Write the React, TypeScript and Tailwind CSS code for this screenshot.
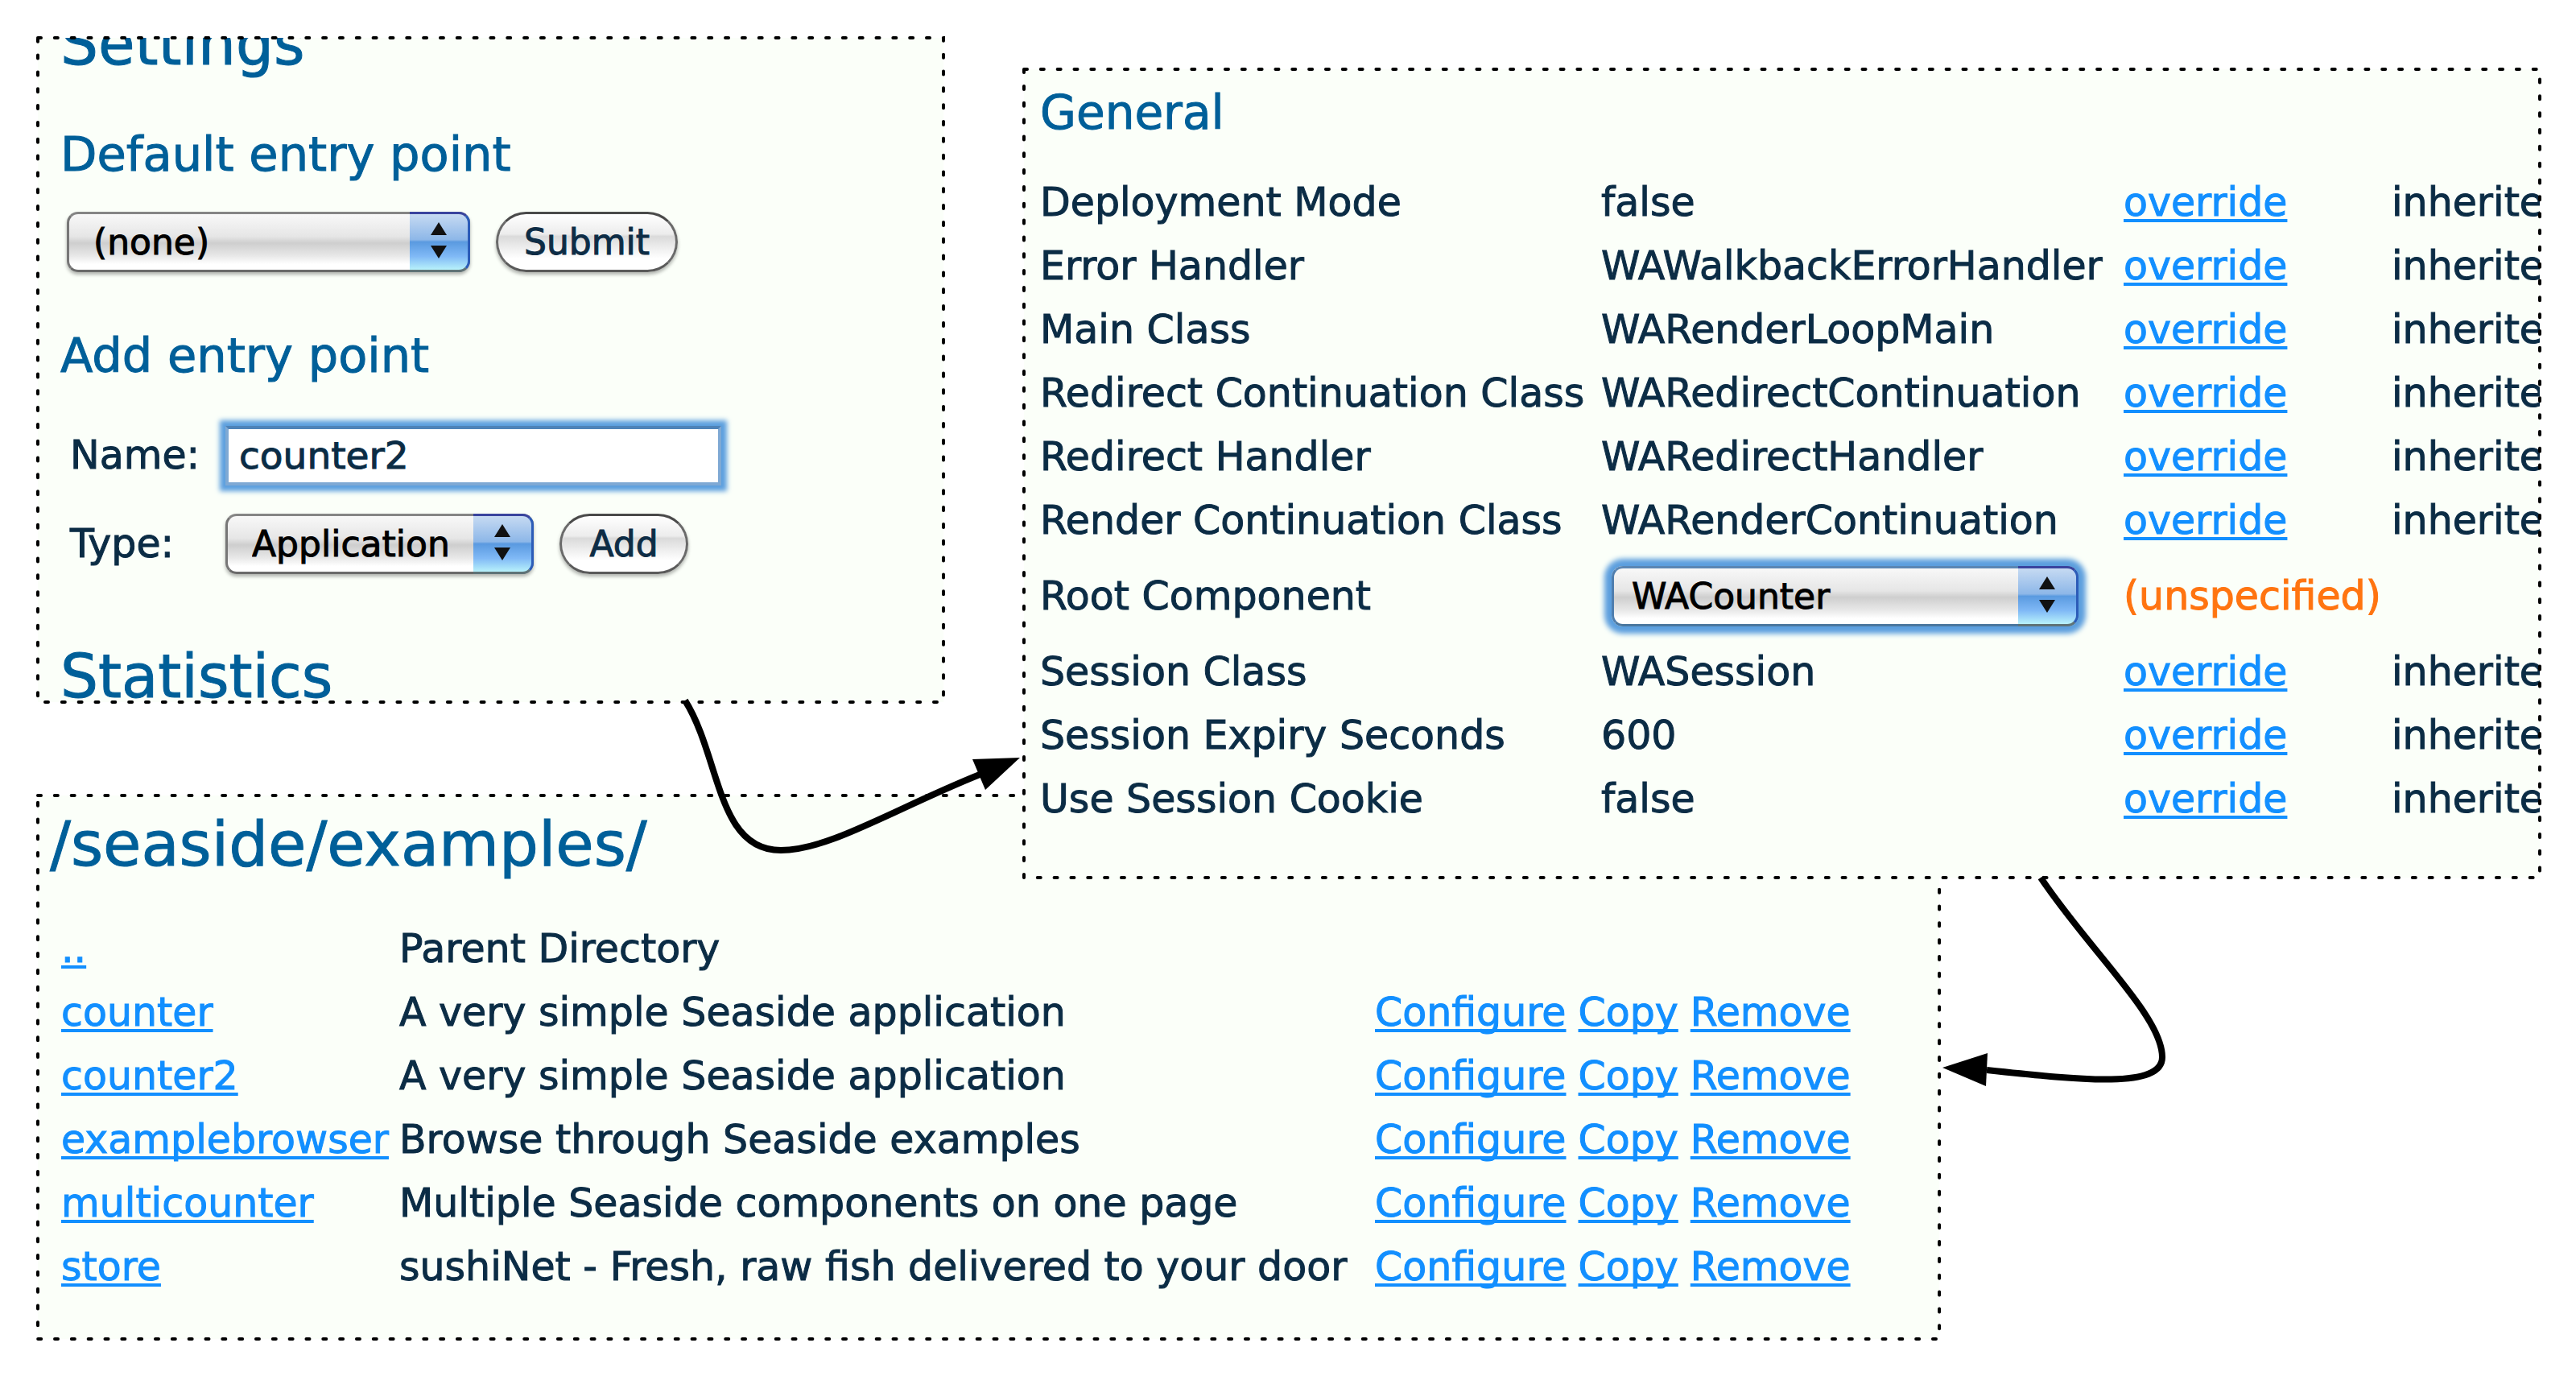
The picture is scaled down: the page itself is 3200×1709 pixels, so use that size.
import { ReactNode } from "react";

const linkClass =
  "text-[#128fff] underline decoration-4 underline-offset-4 [text-decoration-skip-ink:none]";

const greyFrame = "border-t-[#858585] border-r-[#777] border-b-[#6a6a6a] border-l-[#777]";
const focusFrame = "border-t-[#5a86b4] border-r-[#4f7eae] border-b-[#4a779f] border-l-[#4f7eae]";

function DashedFrame() {
  return (
    <svg className="pointer-events-none absolute inset-0 h-full w-full overflow-visible" aria-hidden="true">
      <rect
        width="100%"
        height="100%"
        fill="none"
        stroke="#000"
        strokeWidth="4"
        strokeLinecap="round"
        strokeDasharray="4 16.83"
      />
    </svg>
  );
}

function Panel({ className, bodyClass, children }: { className: string; bodyClass: string; children: ReactNode }) {
  return (
    <section className={`relative bg-[#fbfff9] ${className}`}>
      <div className={`h-full overflow-hidden ${bodyClass}`}>{children}</div>
      <DashedFrame />
    </section>
  );
}

function PopupSelect({
  id,
  label,
  options,
  className,
  selectClass,
}: {
  id: string;
  label?: string;
  options: string[];
  className: string;
  selectClass: string;
}) {
  return (
    <div className={`relative h-[75px] shrink-0 rounded-[14px] ${className}`}>
      <select
        id={id}
        aria-label={label}
        className={`block h-full w-full appearance-none rounded-[14px] border-3 bg-[linear-gradient(#f8f8f8,#e6e6e6_40%,#cecece_52%,#e8e8e8_75%,#fff_90%)] pr-20 text-[44px] leading-[64px] text-black outline-none ${selectClass}`}
      >
        {options.map((o) => (
          <option key={o}>{o}</option>
        ))}
      </select>
      <span className="pointer-events-none absolute inset-y-0 right-0 w-[75px] rounded-r-[14px] border-t-3 border-r-3 border-b-3 border-t-[#3a449e] border-r-[#2c5cb8] border-b-[#5f7377] bg-[linear-gradient(#c6daf2,#8db7e8_46%,#5a9ae0_50%,#80b9f6_76%,#b8f2fb)]">
        <svg viewBox="0 0 72 69" className="h-full w-full" aria-hidden="true">
          <path d="M36 10 L46 26 H26 Z M36 55 L46 39 H26 Z" fill="#111" />
        </svg>
      </span>
    </div>
  );
}

function PillButton({ children, className }: { children: ReactNode; className: string }) {
  return (
    <button
      type="button"
      className={`h-[75px] shrink-0 rounded-full border-3 border-t-[#4a4a4a] border-r-[#6a6a6a] border-b-[#5a5a5a] border-l-[#6a6a6a] bg-[linear-gradient(#fff,#ececec_36%,#dadada_40%,#f2f2f2_65%,#fff_80%)] text-center text-[44px] leading-[64px] text-[#0d2c45] shadow-[0_3px_4px_rgba(0,0,0,0.3)] ${className}`}
    >
      {children}
    </button>
  );
}

const settings = [
  { name: "Deployment Mode", value: "false" },
  { name: "Error Handler", value: "WAWalkbackErrorHandler" },
  { name: "Main Class", value: "WARenderLoopMain" },
  { name: "Redirect Continuation Class", value: "WARedirectContinuation" },
  { name: "Redirect Handler", value: "WARedirectHandler" },
  { name: "Render Continuation Class", value: "WARenderContinuation" },
  { name: "Root Component", value: null },
  { name: "Session Class", value: "WASession" },
  { name: "Session Expiry Seconds", value: "600" },
  { name: "Use Session Cookie", value: "false" },
];

const entries = [
  { name: "..", about: "Parent Directory", actions: false },
  { name: "counter", about: "A very simple Seaside application", actions: true },
  { name: "counter2", about: "A very simple Seaside application", actions: true },
  { name: "examplebrowser", about: "Browse through Seaside examples", actions: true },
  { name: "multicounter", about: "Multiple Seaside components on one page", actions: true },
  { name: "store", about: "sushiNet - Fresh, raw fish delivered to your door", actions: true },
];

function EntryPointPanel() {
  return (
    <Panel className="h-[825px]" bodyClass="pl-7">
      <h2 className="-mt-9 text-[74px] leading-[86px] text-[#005f99]">Settings</h2>
      <h3 className="mt-[61px] text-[59px] leading-[68px] text-[#005f99]">Default entry point</h3>
      <div className="mt-[37px] flex items-center gap-8 pl-2">
        <PopupSelect
          id="default-entry"
          label="Default entry point"
          options={["(none)", "counter"]}
          className="w-[501px] shadow-[0_3px_4px_rgba(0,0,0,0.3)]"
          selectClass={`pl-[30px] ${greyFrame}`}
        />
        <PillButton className="w-[226px]">Submit</PillButton>
      </div>
      <h3 className="mt-[70px] text-[59px] leading-[68px] text-[#005f99]">Add entry point</h3>
      <div className="mt-[50px] flex flex-col gap-[31px] pl-3">
        <div className="flex h-[79px] items-center">
          <label htmlFor="entry-name" className="w-[193px] shrink-0">
            Name:
          </label>
          <input
            id="entry-name"
            type="text"
            defaultValue="counter2"
            className="h-[74px] w-[616px] border-4 border-[#7fa9d4] border-t-[#4e83b8] bg-white pl-[13px] text-[47px] leading-[66px] text-[#0b2c45] outline-none shadow-[0_0_6px_7px_#5c9fde]"
          />
        </div>
        <div className="flex h-[79px] items-center">
          <label htmlFor="entry-type" className="w-[193px] shrink-0">
            Type:
          </label>
          <PopupSelect
            id="entry-type"
            options={["Application", "Directory"]}
            className="w-[383px] shadow-[0_3px_4px_rgba(0,0,0,0.3)]"
            selectClass={`pl-[30px] ${greyFrame}`}
          />
          <PillButton className="ml-8 w-[160px]">Add</PillButton>
        </div>
      </div>
      <h2 className="mt-[82px] text-[74px] leading-[86px] text-[#005f99]">Statistics</h2>
    </Panel>
  );
}

function GeneralPanel() {
  return (
    <Panel className="z-10 mt-[39px] min-w-0" bodyClass="pt-5 pb-[58px] pl-5">
      <h3 className="text-[58px] leading-[68px] text-[#005f99]">General</h3>
      <table className="mt-[38px] w-full table-fixed whitespace-nowrap text-left">
        <colgroup>
          <col className="w-[697px]" />
          <col className="w-[649px]" />
          <col className="w-[333px]" />
          <col />
        </colgroup>
        <tbody>
          {settings.map((s) =>
            s.value === null ? (
              <tr key={s.name} className="h-[109px]">
                <th scope="row" className="p-0 font-normal">
                  <label htmlFor="root-component">{s.name}</label>
                </th>
                <td className="p-0 pl-[13px]">
                  <PopupSelect
                    id="root-component"
                    options={["WACounter", "WAMultiCounter"]}
                    className="w-[580px] shadow-[0_0_6px_9px_#5c9fde]"
                    selectClass={`pl-[22px] ${focusFrame}`}
                  />
                </td>
                <td className="p-0 text-[#ff7410]">(unspecified)</td>
                <td className="p-0" />
              </tr>
            ) : (
              <tr key={s.name} className="h-[79px]">
                <th scope="row" className="p-0 font-normal">
                  {s.name}
                </th>
                <td className="p-0">{s.value}</td>
                <td className="p-0">
                  <a href="#override" className={linkClass}>
                    override
                  </a>
                </td>
                <td className="p-0">inherited</td>
              </tr>
            ),
          )}
        </tbody>
      </table>
    </Panel>
  );
}

function DirectoryPanel() {
  return (
    <Panel className="-mt-[102px] w-[76%]" bodyClass="pt-4 pb-[50px] pl-[15px]">
      <h1 className="text-[77px] leading-[90px] text-[#005f99]">/seaside/examples/</h1>
      <div className="mt-[45px] pl-[14px]">
        <table className="w-full table-fixed whitespace-nowrap text-left">
          <colgroup>
            <col className="w-[420px]" />
            <col className="w-[1212px]" />
            <col />
          </colgroup>
          <tbody>
            {entries.map((e) => (
              <tr key={e.name} className="h-[79px]">
                <td className="p-0">
                  <a href={`#${e.name}`} className={linkClass}>
                    {e.name}
                  </a>
                </td>
                <td className="p-0">{e.about}</td>
                <td className="p-0">
                  {e.actions && (
                    <div className="flex gap-[15px]">
                      <a href="#configure" className={linkClass}>
                        Configure
                      </a>
                      <a href="#copy" className={linkClass}>
                        Copy
                      </a>
                      <a href="#remove" className={linkClass}>
                        Remove
                      </a>
                    </div>
                  )}
                </td>
              </tr>
            ))}
          </tbody>
        </table>
      </div>
    </Panel>
  );
}

function FlowArrows() {
  return (
    <svg
      viewBox="0 0 3200 1709"
      className="pointer-events-none absolute top-0 left-0 z-20 w-full"
      fill="none"
      stroke="#000"
      strokeWidth="8"
      aria-hidden="true"
    >
      <path d="M851 870 C895 940 890 1056 970 1056 C1030 1056 1110 1005 1217 962" />
      <path d="M1267 941 L1208 943 L1224 981 Z" fill="#000" stroke="none" />
      <path d="M2535 1090 C2595 1180 2686 1262 2686 1313 C2686 1352 2590 1342 2468 1329" />
      <path d="M2413 1326 L2469 1308 L2467 1349 Z" fill="#000" stroke="none" />
    </svg>
  );
}

export default function App() {
  return (
    <main className="relative min-h-screen bg-white pt-[47px] pr-[45px] pb-[46px] pl-[47px] font-['DejaVu_Sans',Verdana,sans-serif] text-[49px] leading-[78px] text-[#0b2c45] [-webkit-text-stroke:1px]">
      <div className="grid grid-cols-[1125fr_1883fr] items-start gap-x-[100px]">
        <EntryPointPanel />
        <GeneralPanel />
      </div>
      <DirectoryPanel />
      <FlowArrows />
    </main>
  );
}
